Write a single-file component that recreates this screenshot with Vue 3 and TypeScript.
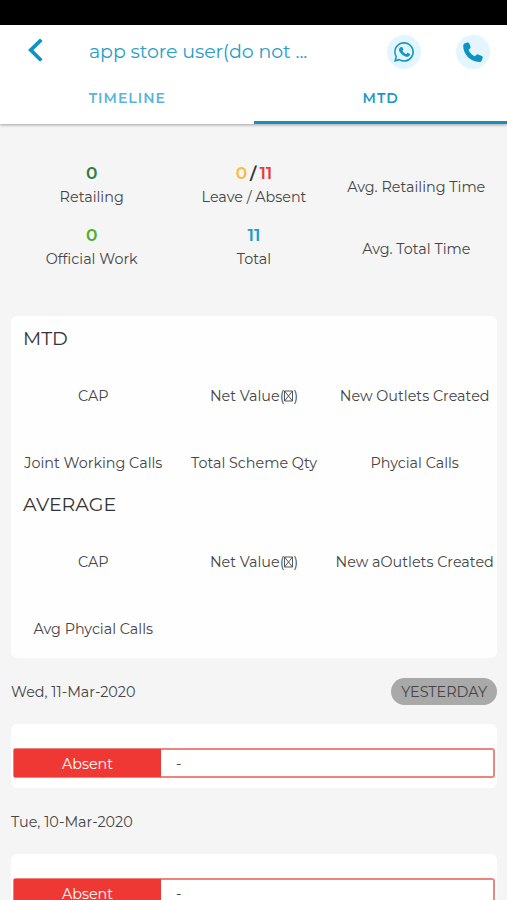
<script setup lang="ts">
interface Metric {
  label: string
  currency?: boolean
}
interface Section {
  title: string
  metrics: Metric[]
}
interface Day {
  date: string
  tag?: string
  status: string
  note: string
}

const sections: Section[] = [
  {
    title: 'MTD',
    metrics: [
      { label: 'CAP' },
      { label: 'Net Value', currency: true },
      { label: 'New Outlets Created' },
      { label: 'Joint Working Calls' },
      { label: 'Total Scheme Qty' },
      { label: 'Phycial Calls' },
    ],
  },
  {
    title: 'AVERAGE',
    metrics: [
      { label: 'CAP' },
      { label: 'Net Value', currency: true },
      { label: 'New aOutlets Created' },
      { label: 'Avg Phycial Calls' },
    ],
  },
]

const days: Day[] = [
  { date: 'Wed, 11-Mar-2020', tag: 'YESTERDAY', status: 'Absent', note: '-' },
  { date: 'Tue, 10-Mar-2020', status: 'Absent', note: '-' },
]
</script>

<template>
  <div class="screen">
    <div class="status-bar"></div>
    <header class="header">
      <div class="toolbar">
        <svg class="back" viewBox="0 0 16 26" width="16" height="26">
          <path d="M14.3 2.7 3.7 13.1 14.3 23.5" fill="none" stroke="#0c93c4" stroke-width="3.7" />
        </svg>
        <h1 class="title">app store user(do not ...</h1>
        <button class="round whatsapp" aria-label="WhatsApp">
          <svg viewBox="0 0 24 24" width="24" height="24" fill="#1496c4">
            <path d="M12.04 2C6.58 2 2.13 6.45 2.13 11.91c0 1.75.46 3.45 1.32 4.95L2.05 22l5.25-1.38a9.9 9.9 0 0 0 4.74 1.21c5.46 0 9.91-4.45 9.91-9.91S17.5 2 12.04 2m0 1.67a8.24 8.24 0 1 1-4.4 15.21l-.3-.18-3.12.82.83-3.04-.2-.31a8.24 8.24 0 0 1 7.19-12.5M8.53 7.33c-.16 0-.43.06-.66.31-.22.25-.87.85-.87 2.07s.89 2.4 1.01 2.56c.13.17 1.75 2.67 4.25 3.73 2.49 1 3 .8 3.54.75s1.74-.71 1.99-1.4c.24-.68.24-1.26.17-1.38s-.22-.19-.47-.31c-.25-.13-1.47-.73-1.69-.81-.23-.08-.37-.12-.56.12-.16.25-.64.81-.78.97-.15.17-.29.19-.53.07-.26-.13-1.06-.39-2-1.23a7.4 7.4 0 0 1-1.38-1.72c-.14-.24-.01-.39.11-.51l.37-.43c.13-.14.17-.25.25-.41.08-.17.04-.31-.02-.43s-.56-1.35-.77-1.84c-.2-.48-.4-.42-.56-.43z" />
          </svg>
        </button>
        <button class="round" aria-label="Call">
          <svg viewBox="0 0 24 24" width="24" height="24" fill="#0c93c4">
            <path d="M4.6 3 6.9 2.400c.6-.1 1 .2 1.300.8l1.300 3.700c.2.5.1 1-.3 1.400L7.600 9.900c1.200 2.800 3.400 5 6.300 6.400l1.700-1.600c.4-.4.900-.5 1.400-.3l3.900 1.500c.6.2.9.7.8 1.300l-.6 2.500c-.4 1.500-1.400 2.400-2.900 2.300C9.200 21.500 2.300 14.200 2.200 6c0-1.500.9-2.700 2.400-3z" />
          </svg>
        </button>
      </div>
      <nav class="tabs">
        <a class="tab timeline"><span>TIMELINE</span></a>
        <a class="tab active"><span>MTD</span></a>
      </nav>
    </header>

    <section class="summary">
      <div class="stat"><b class="green-dark">0</b><span>Retailing</span></div>
      <div class="stat">
        <b><i class="amber">0</i><i class="slash">/</i><i class="red">11</i></b>
        <span>Leave / Absent</span>
      </div>
      <div class="stat plain"><span>Avg. Retailing Time</span></div>
      <div class="stat"><b class="green">0</b><span>Official Work</span></div>
      <div class="stat"><b class="blue">11</b><span>Total</span></div>
      <div class="stat plain"><span>Avg. Total Time</span></div>
    </section>

    <section class="card">
      <template v-for="section in sections" :key="section.title">
        <h2>{{ section.title }}</h2>
        <div class="metrics">
          <div v-for="metric in section.metrics" :key="metric.label" class="metric">
            <span>{{ metric.label }}<template v-if="metric.currency">(<svg class="tofu" viewBox="0 0 9 12" width="9" height="12"><path d="M.5 1h8v10h-8zM.5 1l8 10M8.500 1l-8 10" fill="none" stroke="#444" stroke-width=".9" /></svg>)</template></span>
          </div>
        </div>
      </template>
    </section>

    <section v-for="day in days" :key="day.date" class="day">
      <div class="day-head">
        <span>{{ day.date }}</span>
        <em v-if="day.tag">{{ day.tag }}</em>
      </div>
      <div class="day-card">
        <div class="entry">
          <strong>{{ day.status }}</strong>
          <span>{{ day.note }}</span>
        </div>
      </div>
    </section>
  </div>
</template>

<style>
body {
  background: #f5f5f5;
}
</style>

<style scoped>
.screen,
.screen * {
  box-sizing: border-box;
}
.screen {
  height: 900px;
  overflow: hidden;
  background: #f5f5f5;
  color: #454545;
  font: 14.35px/20px Montserrat, Inter, sans-serif;
}
.status-bar {
  height: 25px;
  background: #000;
}
.header {
  height: 98.5px;
  background: #fff;
  box-shadow: 0 1px 3px rgba(0, 0, 0, 0.35);
}
.toolbar {
  display: flex;
  align-items: center;
  height: 52px;
  padding: 2px 17px 0 27px;
}
.back {
  margin-top: -4px;
}
.title {
  flex: 1;
  margin: -1px 0 0 46px;
  color: #2a9dca;
  font-size: 19px;
  font-weight: 400;
  letter-spacing: -0.1px;
  white-space: nowrap;
}
.round {
  display: flex;
  align-items: center;
  justify-content: center;
  width: 34px;
  height: 34px;
  padding: 0;
  border: 0;
  border-radius: 50%;
  background: #e3f6fd;
}
.whatsapp {
  margin-right: 35px;
}
.tabs {
  display: grid;
  grid-template-columns: 1fr 1fr;
  height: 46.5px;
}
.tab {
  display: flex;
  align-items: center;
  justify-content: center;
  padding: 0 0 1px 1px;
  color: #58b5dc;
  font-size: 14px;
  font-weight: 600;
  letter-spacing: 1px;
  border-bottom: 3px solid transparent;
}
.tab.active {
  color: #1d98c6;
  border-bottom-color: #1690bb;
}
.summary {
  display: grid;
  grid-template-columns: repeat(3, 1fr);
  grid-auto-rows: 62px;
  height: 192.5px;
  padding: 37.5px 9.500px 0 10.500px;
}
.stat {
  display: flex;
  flex-direction: column;
  align-items: center;
  white-space: nowrap;
}
.stat b {
  height: 24px;
  line-height: 24px;
  font-size: 17px;
  font-weight: 600;
}
.stat span {
  line-height: 25px;
}
.stat i {
  font-style: normal;
}
.plain {
  padding-top: 14px;
}
.slash {
  margin: 0 3px;
  color: #333;
}
.green-dark { color: #2d7d46; }
.green { color: #4fae33; }
.amber { color: #f6bd42; }
.red { color: #e53b3b; }
.blue { color: #1b9bd0; }
.card {
  height: 342px;
  margin: 0 10px 0 11px;
  padding: 8px 0 2px;
  border-radius: 6px;
  background: #fefefe;
}
.card h2 {
  height: 32px;
  margin: 0 0 0 12px;
  font-size: 19px;
  font-weight: 400;
  line-height: 29px;
  color: #333;
}
.metrics {
  display: grid;
  grid-template-columns: repeat(3, minmax(0, 1fr));
  grid-auto-rows: 67px;
  padding: 0 2px;
}
.metric {
  display: flex;
  justify-content: center;
  padding-top: 30px;
  white-space: nowrap;
}
.tofu {
  vertical-align: -1px;
}
.day-head {
  display: flex;
  align-items: center;
  justify-content: space-between;
  height: 66px;
  padding: 0 10px 0 11px;
}
.day-head span {
  padding-top: 2px;
}
.day-head em {
  height: 27px;
  padding: 0 10px;
  border-radius: 14px;
  background: #a9a9a9;
  color: #444;
  font-style: normal;
  line-height: 28px;
}
.day-card {
  height: 63.5px;
  margin: 0 10px 0 11px;
  padding: 24px 2px 0;
  border-radius: 6px;
  background: #fff;
}
.entry {
  display: grid;
  grid-template-columns: 146px 1fr;
  height: 30px;
  border: 2px solid #f0827f;
  border-radius: 3px;
  line-height: 28px;
}
.entry strong {
  height: 28px;
  margin: -1px 0 -1px -1px;
  background: #ef3834;
  color: #fff;
  font-weight: 400;
  line-height: 30px;
  text-align: center;
}
.entry span {
  padding-left: 15px;
}
</style>
